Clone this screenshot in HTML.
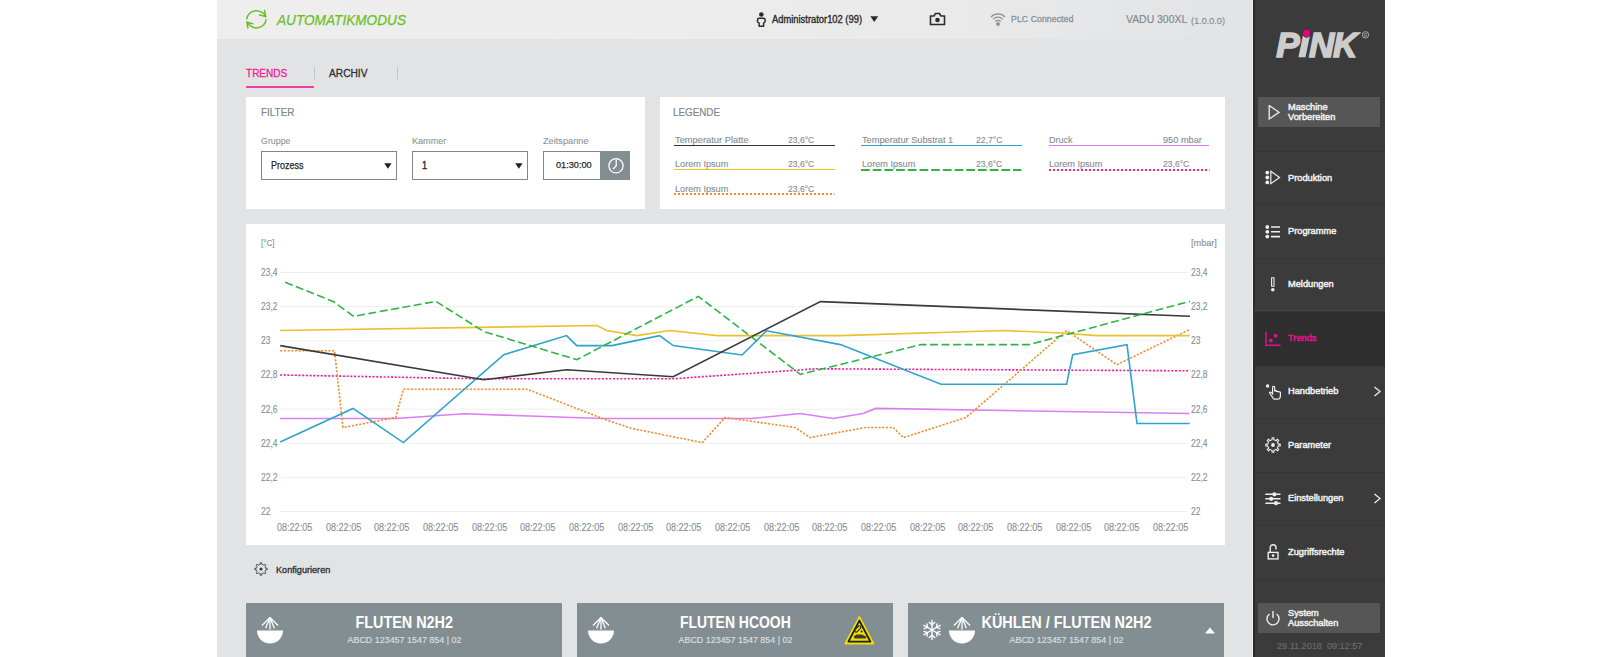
<!DOCTYPE html>
<html><head><meta charset="utf-8">
<style>
*{margin:0;padding:0;box-sizing:border-box}
html,body{width:1601px;height:657px;overflow:hidden;background:#fff}
body{position:relative;font-family:"Liberation Sans",sans-serif}
.a{position:absolute;white-space:nowrap;line-height:1}
.b{position:absolute}
</style></head><body>
<div class="b" style="left:217px;top:0;width:1037px;height:657px;background:#e2e3e4"></div>
<div class="b" style="left:217px;top:0;width:1036px;height:39px;background:linear-gradient(to right,#eeeeee 0%,#ededed 40%,#e9e9ea 75%,#e3e4e5 95%)"></div>
<svg class="a" style="left:244px;top:8px" width="24" height="22" viewBox="0 0 24 22">
  <g fill="none" stroke="#6cbf1f" stroke-width="1.5" stroke-linecap="round" stroke-linejoin="round">
    <path d="M2.81 10.85 A9.6 8.6 0 0 1 21.58 8.79"/>
    <path d="M21.99 11.75 A9.6 8.6 0 0 1 3.38 14.24"/>
    <path d="M15.6 6.9 L21.6 8.4 L20.6 2.6"/>
    <path d="M8.7 15.8 L2.9 14.3 L3.9 20"/>
  </g>
</svg>
<div class="a" style="left:277.00px;top:13.07px;font-size:14.57px;color:#6cbf1f;font-style:italic;-webkit-text-stroke:0.25px #6cbf1f;transform:scaleX(0.9361);transform-origin:0 0">AUTOMATIKMODUS</div>
<svg class="a" style="left:755px;top:12px" width="12" height="15" viewBox="0 0 12 15">
  <circle cx="6.3" cy="2.5" r="2.3" fill="#2b2b2b"/>
  <path d="M2.5 7.8 Q2.5 6.3 4 6.3 H8.6 Q10.1 6.3 10.1 7.8 V9.6 Q10.1 10.6 8.6 11 V14.2 H4.1 V11 Q2.5 10.6 2.5 9.6 Z" fill="none" stroke="#2b2b2b" stroke-width="1.5" stroke-linejoin="round"/>
</svg>
<div class="a" style="left:771.90px;top:15.23px;font-size:10.0px;color:#2b2b2b;-webkit-text-stroke:0.35px #2b2b2b;transform:scaleX(0.9360);transform-origin:0 0">Administrator102 (99)</div>
<svg class="a" style="left:869.5px;top:16.3px" width="9" height="7"><path d="M0.3 0.3 H8.2 L4.25 6 Z" fill="#2b2b2b"/></svg>
<svg class="a" style="left:929px;top:12px" width="17" height="14" viewBox="0 0 17 14">
  <path d="M1.5 4 H5 L6.5 1.5 H10.5 L12 4 H15.5 V12.5 H1.5 Z" fill="none" stroke="#2b2b2b" stroke-width="1.6"/>
  <circle cx="8.5" cy="8" r="2.3" fill="#2b2b2b"/>
</svg>
<svg class="a" style="left:990px;top:12px" width="16" height="15" viewBox="0 0 16 15">
  <g fill="none" stroke="#8a9296" stroke-width="1.2">
    <path d="M1 5 A9.5 9.5 0 0 1 15 5"/>
    <path d="M3.2 7.3 A6.5 6.5 0 0 1 12.8 7.3"/>
    <path d="M5.3 9.5 A3.6 3.6 0 0 1 10.7 9.5"/>
  </g>
  <circle cx="8" cy="12" r="1.9" fill="#8a9296"/>
</svg>
<div class="a" style="left:1010.50px;top:15.44px;font-size:9.29px;color:#8a9296;-webkit-text-stroke:0.3px #8a9296;transform:scaleX(0.9522);transform-origin:0 0">PLC Connected</div>
<div class="a" style="left:1125.80px;top:14.22px;font-size:11.43px;color:#7e878b;-webkit-text-stroke:0.15px #7e878b;transform:scaleX(0.9122);transform-origin:0 0">VADU 300XL</div>
<div class="a" style="left:1190.50px;top:16.76px;font-size:8.43px;color:#7e878b;-webkit-text-stroke:0.1px #7e878b;transform:scaleX(1.0837);transform-origin:0 0">(1.0.0.0)</div>
<div class="a" style="left:246.00px;top:68.24px;font-size:11.29px;color:#ee1d97;-webkit-text-stroke:0.3px #ee1d97;transform:scaleX(0.8892);transform-origin:0 0">TRENDS</div>
<div class="b" style="left:246px;top:86px;width:68px;height:2px;background:#ee3fa6"></div>
<div class="b" style="left:314px;top:67px;width:1px;height:12px;background:#c4c7c9"></div>
<div class="a" style="left:329.00px;top:68.24px;font-size:11.29px;color:#2e2e2e;-webkit-text-stroke:0.3px #2e2e2e;transform:scaleX(0.9032);transform-origin:0 0">ARCHIV</div>
<div class="b" style="left:397px;top:67px;width:1px;height:12px;background:#c4c7c9"></div>
<div class="b" style="left:246px;top:97px;width:399px;height:112px;background:#fff"></div>
<div class="a" style="left:261.00px;top:106.84px;font-size:11.29px;color:#7d878b;-webkit-text-stroke:0.2px #7d878b;transform:scaleX(0.8782);transform-origin:0 0">FILTER</div>
<div class="a" style="left:260.75px;top:137.44px;font-size:9.29px;color:#8a9498;-webkit-text-stroke:0.1px #8a9498;transform:scaleX(0.9526);transform-origin:0 0">Gruppe</div>
<div class="a" style="left:411.70px;top:137.44px;font-size:9.29px;color:#8a9498;-webkit-text-stroke:0.1px #8a9498;transform:scaleX(0.9764);transform-origin:0 0">Kammer</div>
<div class="a" style="left:542.90px;top:137.44px;font-size:9.29px;color:#8a9498;-webkit-text-stroke:0.1px #8a9498;transform:scaleX(0.9908);transform-origin:0 0">Zeitspanne</div>
<div class="b" style="left:261px;top:151px;width:136px;height:29px;border:1.5px solid #7f898d;background:#fff"></div>
<div class="a" style="left:270.75px;top:161.14px;font-size:10.0px;color:#262626;-webkit-text-stroke:0.25px #262626;transform:scaleX(0.8997);transform-origin:0 0">Prozess</div>
<svg class="a" style="left:383.5px;top:162.5px" width="9" height="7"><path d="M0.2 0.2 H7.6 L3.9 5.8 Z" fill="#222"/></svg>
<div class="b" style="left:411.5px;top:151px;width:116.5px;height:29px;border:1.5px solid #7f898d;background:#fff"></div>
<div class="a" style="left:422.00px;top:161.14px;font-size:10.0px;color:#262626;-webkit-text-stroke:0.35px #262626;transform:scaleX(0.9200);transform-origin:0 0">1</div>
<svg class="a" style="left:514.6px;top:162.5px" width="9" height="7"><path d="M0.2 0.2 H7.6 L3.9 5.8 Z" fill="#222"/></svg>
<div class="b" style="left:543px;top:151px;width:87px;height:29px;border:1.5px solid #7f898d;background:#fff"></div>
<div class="b" style="left:600.3px;top:151px;width:29.7px;height:29px;background:#838e92"></div>
<div class="a" style="left:555.50px;top:161.34px;font-size:9.29px;color:#2a2a2a;-webkit-text-stroke:0.25px #2a2a2a;transform:scaleX(0.9878);transform-origin:0 0">01:30:00</div>
<svg class="a" style="left:606px;top:155.5px" width="20" height="20" viewBox="0 0 20 20">
  <circle cx="10" cy="9.8" r="7.1" fill="none" stroke="#fff" stroke-width="1.25"/>
  <path d="M10.2 3.2 V10 L7 13" fill="none" stroke="#fff" stroke-width="1.25"/>
</svg>
<div class="b" style="left:660px;top:97px;width:565px;height:112px;background:#fff"></div>
<div class="a" style="left:673.40px;top:106.82px;font-size:11.43px;color:#7d878b;-webkit-text-stroke:0.2px #7d878b;transform:scaleX(0.8609);transform-origin:0 0">LEGENDE</div>
<div class="a" style="left:674.60px;top:135.12px;font-size:9.43px;color:#858e92;-webkit-text-stroke:0.12px #858e92;transform:scaleX(0.9896);transform-origin:0 0">Temperatur Platte</div>
<div class="a" style="left:788.30px;top:135.12px;font-size:9.43px;color:#858e92;-webkit-text-stroke:0.12px #858e92;transform:scaleX(0.9093);transform-origin:0 0">23,6°C</div>
<div class="b" style="left:674.1px;top:144.6px;width:160.5px;height:1.6px;background:#333333"></div>
<div class="a" style="left:674.60px;top:159.32px;font-size:9.43px;color:#858e92;-webkit-text-stroke:0.12px #858e92;transform:scaleX(0.9694);transform-origin:0 0">Lorem Ipsum</div>
<div class="a" style="left:788.30px;top:159.32px;font-size:9.43px;color:#858e92;-webkit-text-stroke:0.12px #858e92;transform:scaleX(0.9093);transform-origin:0 0">23,6°C</div>
<div class="b" style="left:674.1px;top:168.7px;width:160.5px;height:1.6px;background:#e8c12c"></div>
<div class="a" style="left:674.60px;top:183.72px;font-size:9.43px;color:#858e92;-webkit-text-stroke:0.12px #858e92;transform:scaleX(0.9694);transform-origin:0 0">Lorem Ipsum</div>
<div class="a" style="left:788.30px;top:183.72px;font-size:9.43px;color:#858e92;-webkit-text-stroke:0.12px #858e92;transform:scaleX(0.9093);transform-origin:0 0">23,6°C</div>
<svg class="a" style="left:674.1px;top:192.0px" width="162" height="4"><line x1="0" y1="2" x2="160.5" y2="2" stroke="#f28a2e" stroke-width="1.8" stroke-dasharray="2 2"/></svg>
<div class="a" style="left:861.90px;top:135.12px;font-size:9.43px;color:#858e92;-webkit-text-stroke:0.12px #858e92;transform:scaleX(0.9783);transform-origin:0 0">Temperatur Substrat 1</div>
<div class="a" style="left:975.60px;top:135.12px;font-size:9.43px;color:#858e92;-webkit-text-stroke:0.12px #858e92;transform:scaleX(0.9128);transform-origin:0 0">22,7°C</div>
<div class="b" style="left:861.4px;top:144.6px;width:160.5px;height:1.6px;background:#2ea3cc"></div>
<div class="a" style="left:861.90px;top:159.32px;font-size:9.43px;color:#858e92;-webkit-text-stroke:0.12px #858e92;transform:scaleX(0.9694);transform-origin:0 0">Lorem Ipsum</div>
<div class="a" style="left:975.60px;top:159.32px;font-size:9.43px;color:#858e92;-webkit-text-stroke:0.12px #858e92;transform:scaleX(0.9093);transform-origin:0 0">23,6°C</div>
<svg class="a" style="left:861.4px;top:167.5px" width="162" height="4"><line x1="0" y1="2" x2="160.5" y2="2" stroke="#2fb544" stroke-width="1.8" stroke-dasharray="8.7 3"/></svg>
<div class="a" style="left:1049.40px;top:135.12px;font-size:9.43px;color:#858e92;-webkit-text-stroke:0.12px #858e92;transform:scaleX(0.9509);transform-origin:0 0">Druck</div>
<div class="a" style="left:1163.10px;top:135.12px;font-size:9.43px;color:#858e92;-webkit-text-stroke:0.12px #858e92;transform:scaleX(0.9771);transform-origin:0 0">950 mbar</div>
<div class="b" style="left:1048.9px;top:144.6px;width:160.5px;height:1.6px;background:#d979f2"></div>
<div class="a" style="left:1049.40px;top:159.32px;font-size:9.43px;color:#858e92;-webkit-text-stroke:0.12px #858e92;transform:scaleX(0.9694);transform-origin:0 0">Lorem Ipsum</div>
<div class="a" style="left:1163.10px;top:159.32px;font-size:9.43px;color:#858e92;-webkit-text-stroke:0.12px #858e92;transform:scaleX(0.9093);transform-origin:0 0">23,6°C</div>
<svg class="a" style="left:1048.9px;top:167.5px" width="162" height="4"><line x1="0" y1="2" x2="160.5" y2="2" stroke="#f01d9b" stroke-width="1.8" stroke-dasharray="2 2"/></svg>
<div class="b" style="left:246px;top:224px;width:978.5px;height:321px;background:#fff"></div>
<div class="a" style="left:261.00px;top:267.92px;font-size:10.14px;color:#848d91;-webkit-text-stroke:0.1px #848d91;transform:scaleX(0.8368);transform-origin:0 0">23,4</div>
<div class="a" style="left:1190.50px;top:267.92px;font-size:10.14px;color:#848d91;-webkit-text-stroke:0.1px #848d91;transform:scaleX(0.8368);transform-origin:0 0">23,4</div>
<div class="a" style="left:261.00px;top:302.07px;font-size:10.14px;color:#848d91;-webkit-text-stroke:0.1px #848d91;transform:scaleX(0.8368);transform-origin:0 0">23,2</div>
<div class="a" style="left:1190.50px;top:302.07px;font-size:10.14px;color:#848d91;-webkit-text-stroke:0.1px #848d91;transform:scaleX(0.8368);transform-origin:0 0">23,2</div>
<div class="a" style="left:261.00px;top:336.22px;font-size:10.14px;color:#848d91;-webkit-text-stroke:0.1px #848d91;transform:scaleX(0.8368);transform-origin:0 0">23</div>
<div class="a" style="left:1190.50px;top:336.22px;font-size:10.14px;color:#848d91;-webkit-text-stroke:0.1px #848d91;transform:scaleX(0.8368);transform-origin:0 0">23</div>
<div class="a" style="left:261.00px;top:370.37px;font-size:10.14px;color:#848d91;-webkit-text-stroke:0.1px #848d91;transform:scaleX(0.8368);transform-origin:0 0">22,8</div>
<div class="a" style="left:1190.50px;top:370.37px;font-size:10.14px;color:#848d91;-webkit-text-stroke:0.1px #848d91;transform:scaleX(0.8368);transform-origin:0 0">22,8</div>
<div class="a" style="left:261.00px;top:404.52px;font-size:10.14px;color:#848d91;-webkit-text-stroke:0.1px #848d91;transform:scaleX(0.8368);transform-origin:0 0">22,6</div>
<div class="a" style="left:1190.50px;top:404.52px;font-size:10.14px;color:#848d91;-webkit-text-stroke:0.1px #848d91;transform:scaleX(0.8368);transform-origin:0 0">22,6</div>
<div class="a" style="left:261.00px;top:438.67px;font-size:10.14px;color:#848d91;-webkit-text-stroke:0.1px #848d91;transform:scaleX(0.8368);transform-origin:0 0">22,4</div>
<div class="a" style="left:1190.50px;top:438.67px;font-size:10.14px;color:#848d91;-webkit-text-stroke:0.1px #848d91;transform:scaleX(0.8368);transform-origin:0 0">22,4</div>
<div class="a" style="left:261.00px;top:472.82px;font-size:10.14px;color:#848d91;-webkit-text-stroke:0.1px #848d91;transform:scaleX(0.8368);transform-origin:0 0">22,2</div>
<div class="a" style="left:1190.50px;top:472.82px;font-size:10.14px;color:#848d91;-webkit-text-stroke:0.1px #848d91;transform:scaleX(0.8368);transform-origin:0 0">22,2</div>
<div class="a" style="left:261.00px;top:506.97px;font-size:10.14px;color:#848d91;-webkit-text-stroke:0.1px #848d91;transform:scaleX(0.8368);transform-origin:0 0">22</div>
<div class="a" style="left:1190.50px;top:506.97px;font-size:10.14px;color:#848d91;-webkit-text-stroke:0.1px #848d91;transform:scaleX(0.8368);transform-origin:0 0">22</div>
<div class="a" style="left:261.00px;top:238.32px;font-size:9.43px;color:#848d91;-webkit-text-stroke:0.1px #848d91;transform:scaleX(0.8538);transform-origin:0 0">[°C]</div>
<div class="a" style="left:1190.50px;top:238.32px;font-size:9.43px;color:#848d91;-webkit-text-stroke:0.1px #848d91;transform:scaleX(0.9699);transform-origin:0 0">[mbar]</div>
<div class="a" style="left:277.00px;top:523.02px;font-size:10.14px;color:#848d91;-webkit-text-stroke:0.1px #848d91;transform:scaleX(0.8942);transform-origin:0 0">08:22:05</div>
<div class="a" style="left:325.67px;top:523.02px;font-size:10.14px;color:#848d91;-webkit-text-stroke:0.1px #848d91;transform:scaleX(0.8942);transform-origin:0 0">08:22:05</div>
<div class="a" style="left:374.34px;top:523.02px;font-size:10.14px;color:#848d91;-webkit-text-stroke:0.1px #848d91;transform:scaleX(0.8942);transform-origin:0 0">08:22:05</div>
<div class="a" style="left:423.01px;top:523.02px;font-size:10.14px;color:#848d91;-webkit-text-stroke:0.1px #848d91;transform:scaleX(0.8942);transform-origin:0 0">08:22:05</div>
<div class="a" style="left:471.68px;top:523.02px;font-size:10.14px;color:#848d91;-webkit-text-stroke:0.1px #848d91;transform:scaleX(0.8942);transform-origin:0 0">08:22:05</div>
<div class="a" style="left:520.35px;top:523.02px;font-size:10.14px;color:#848d91;-webkit-text-stroke:0.1px #848d91;transform:scaleX(0.8942);transform-origin:0 0">08:22:05</div>
<div class="a" style="left:569.02px;top:523.02px;font-size:10.14px;color:#848d91;-webkit-text-stroke:0.1px #848d91;transform:scaleX(0.8942);transform-origin:0 0">08:22:05</div>
<div class="a" style="left:617.69px;top:523.02px;font-size:10.14px;color:#848d91;-webkit-text-stroke:0.1px #848d91;transform:scaleX(0.8942);transform-origin:0 0">08:22:05</div>
<div class="a" style="left:666.36px;top:523.02px;font-size:10.14px;color:#848d91;-webkit-text-stroke:0.1px #848d91;transform:scaleX(0.8942);transform-origin:0 0">08:22:05</div>
<div class="a" style="left:715.03px;top:523.02px;font-size:10.14px;color:#848d91;-webkit-text-stroke:0.1px #848d91;transform:scaleX(0.8942);transform-origin:0 0">08:22:05</div>
<div class="a" style="left:763.70px;top:523.02px;font-size:10.14px;color:#848d91;-webkit-text-stroke:0.1px #848d91;transform:scaleX(0.8942);transform-origin:0 0">08:22:05</div>
<div class="a" style="left:812.37px;top:523.02px;font-size:10.14px;color:#848d91;-webkit-text-stroke:0.1px #848d91;transform:scaleX(0.8942);transform-origin:0 0">08:22:05</div>
<div class="a" style="left:861.04px;top:523.02px;font-size:10.14px;color:#848d91;-webkit-text-stroke:0.1px #848d91;transform:scaleX(0.8942);transform-origin:0 0">08:22:05</div>
<div class="a" style="left:909.71px;top:523.02px;font-size:10.14px;color:#848d91;-webkit-text-stroke:0.1px #848d91;transform:scaleX(0.8942);transform-origin:0 0">08:22:05</div>
<div class="a" style="left:958.38px;top:523.02px;font-size:10.14px;color:#848d91;-webkit-text-stroke:0.1px #848d91;transform:scaleX(0.8942);transform-origin:0 0">08:22:05</div>
<div class="a" style="left:1007.05px;top:523.02px;font-size:10.14px;color:#848d91;-webkit-text-stroke:0.1px #848d91;transform:scaleX(0.8942);transform-origin:0 0">08:22:05</div>
<div class="a" style="left:1055.72px;top:523.02px;font-size:10.14px;color:#848d91;-webkit-text-stroke:0.1px #848d91;transform:scaleX(0.8942);transform-origin:0 0">08:22:05</div>
<div class="a" style="left:1104.39px;top:523.02px;font-size:10.14px;color:#848d91;-webkit-text-stroke:0.1px #848d91;transform:scaleX(0.8942);transform-origin:0 0">08:22:05</div>
<div class="a" style="left:1153.06px;top:523.02px;font-size:10.14px;color:#848d91;-webkit-text-stroke:0.1px #848d91;transform:scaleX(0.8942);transform-origin:0 0">08:22:05</div>
<svg class="a" style="left:0;top:0" width="1601" height="657">
<line x1="280" y1="272.50" x2="1187" y2="272.50" stroke="#efefef" stroke-width="1"/>
<line x1="280" y1="306.65" x2="1187" y2="306.65" stroke="#efefef" stroke-width="1"/>
<line x1="280" y1="340.80" x2="1187" y2="340.80" stroke="#efefef" stroke-width="1"/>
<line x1="280" y1="374.95" x2="1187" y2="374.95" stroke="#efefef" stroke-width="1"/>
<line x1="280" y1="409.10" x2="1187" y2="409.10" stroke="#efefef" stroke-width="1"/>
<line x1="280" y1="443.25" x2="1187" y2="443.25" stroke="#efefef" stroke-width="1"/>
<line x1="280" y1="477.40" x2="1187" y2="477.40" stroke="#efefef" stroke-width="1"/>
<line x1="280" y1="511.55" x2="1187" y2="511.55" stroke="#efefef" stroke-width="1"/>
<polyline points="280.0,418.5 396.0,418.5 464.0,413.8 601.8,418.5 752.0,418.5 800.2,413.5 833.0,418.5 863.0,413.5 875.7,408.4 1189.7,413.5" fill="none" stroke="#d97ff2" stroke-width="1.6" stroke-linejoin="miter"/>
<polyline points="280.0,375.0 481.0,378.8 673.0,378.8 816.0,368.8 1189.7,370.8" fill="none" stroke="#f01d9b" stroke-width="1.6" stroke-linejoin="miter" stroke-dasharray="2.1 1.6"/>
<polyline points="280.2,350.7 334.5,350.7 343.0,427.5 395.8,417.5 403.3,389.3 527.0,389.2 606.0,419.8 632.0,428.5 702.3,442.6 725.0,417.5 795.0,427.5 810.0,437.6 865.6,427.5 893.3,427.5 903.3,437.6 966.0,417.5 1066.6,330.5 1116.9,364.7 1189.7,329.5" fill="none" stroke="#f28a2e" stroke-width="1.6" stroke-linejoin="miter" stroke-dasharray="2.1 1.6"/>
<polyline points="280.0,330.5 596.8,325.5 606.8,330.5 637.0,335.6 669.6,330.5 717.4,335.6 840.5,335.6 1003.8,330.5 1061.6,333.0 1096.8,335.6 1189.7,335.6" fill="none" stroke="#e8c12c" stroke-width="1.6" stroke-linejoin="miter"/>
<polyline points="280.2,442.0 353.0,408.4 403.3,442.6 503.8,354.7 566.6,335.6 576.7,345.6 611.9,345.6 659.6,335.6 673.2,345.6 742.0,355.0 766.5,330.8 840.5,344.6 941.0,384.3 1066.6,384.3 1072.7,354.7 1127.0,344.6 1137.0,423.5 1189.7,423.5" fill="none" stroke="#2ea3cc" stroke-width="1.6" stroke-linejoin="miter"/>
<polyline points="280.2,345.6 483.7,379.8 566.6,369.7 673.2,376.8 820.4,301.6 1190.0,316.2" fill="none" stroke="#3a3a3a" stroke-width="1.6" stroke-linejoin="miter"/>
<polyline points="285.2,282.2 333.8,301.8 353.6,316.3 436.0,301.4 483.7,331.5 576.7,359.7 698.3,296.4 800.3,374.3 921.0,344.6 1029.0,344.6 1190.0,301.3" fill="none" stroke="#2fb544" stroke-width="1.6" stroke-linejoin="miter" stroke-dasharray="8 3.5"/>
</svg>
<svg class="a" style="left:252.6px;top:561.3px" width="16" height="16" viewBox="0 0 16 16"><path d="M12.38 6.29 L12.64 7.23 L14.15 7.18 L14.15 8.82 L12.64 8.77 L12.38 9.71 L12.31 9.88 L11.82 10.73 L12.92 11.77 L11.77 12.92 L10.73 11.82 L9.88 12.31 L9.71 12.38 L8.77 12.64 L8.82 14.15 L7.18 14.15 L7.23 12.64 L6.29 12.38 L6.12 12.31 L5.27 11.82 L4.23 12.92 L3.08 11.77 L4.18 10.73 L3.69 9.88 L3.62 9.71 L3.36 8.77 L1.85 8.82 L1.85 7.18 L3.36 7.23 L3.62 6.29 L3.69 6.12 L4.18 5.27 L3.08 4.23 L4.23 3.08 L5.27 4.18 L6.12 3.69 L6.29 3.62 L7.23 3.36 L7.18 1.85 L8.82 1.85 L8.77 3.36 L9.71 3.62 L9.88 3.69 L10.73 4.18 L11.77 3.08 L12.92 4.23 L11.82 5.27 L12.31 6.12 Z" fill="none" stroke="#3a3a3a" stroke-width="0.9" stroke-linejoin="round"/><circle cx="8" cy="8" r="1.6" fill="#3a3a3a"/></svg>
<div class="a" style="left:275.80px;top:565.54px;font-size:9.29px;color:#2b2b2b;-webkit-text-stroke:0.3px #2b2b2b;transform:scaleX(0.9834);transform-origin:0 0">Konfigurieren</div>
<div class="b" style="left:246px;top:603px;width:316px;height:54px;background:#838e93"></div>
<div class="a" style="left:350.77px;top:614.70px;font-size:15.71px;color:#fff;font-weight:bold;transform:scaleX(0.9168);transform-origin:50% 0">FLUTEN N2H2</div>
<div class="a" style="left:346.53px;top:636.08px;font-size:9.0px;color:#dde1e3;-webkit-text-stroke:0.12px #dde1e3;transform:scaleX(0.9918);transform-origin:50% 0">ABCD 123457 1547 854 | 02</div>
<div class="b" style="left:577px;top:603px;width:316px;height:54px;background:#838e93"></div>
<div class="a" style="left:672.62px;top:614.70px;font-size:15.71px;color:#fff;font-weight:bold;transform:scaleX(0.8882);transform-origin:50% 0">FLUTEN HCOOH</div>
<div class="a" style="left:677.53px;top:636.08px;font-size:9.0px;color:#dde1e3;-webkit-text-stroke:0.12px #dde1e3;transform:scaleX(0.9918);transform-origin:50% 0">ABCD 123457 1547 854 | 02</div>
<div class="b" style="left:908px;top:603px;width:316.3px;height:54px;background:#838e93"></div>
<div class="a" style="left:973.67px;top:614.70px;font-size:15.71px;color:#fff;font-weight:bold;transform:scaleX(0.9191);transform-origin:50% 0">KÜHLEN / FLUTEN N2H2</div>
<div class="a" style="left:1008.68px;top:636.08px;font-size:9.0px;color:#dde1e3;-webkit-text-stroke:0.12px #dde1e3;transform:scaleX(0.9918);transform-origin:50% 0">ABCD 123457 1547 854 | 02</div>
<svg class="a" style="left:256.3px;top:616.5px" width="28" height="28" viewBox="0 0 28 28">
<path d="M1 13.5 H27 A13 13 0 0 1 1 13.5 Z" fill="#fff"/>
<g stroke="#fff" stroke-width="1.3" fill="none"><path d="M14 0.5 V12.5"/><path d="M14 0.5 L6 8.5"/><path d="M14 0.5 L22 8.5"/><path d="M14 0.5 L9.6 11.2"/><path d="M14 0.5 L18.4 11.2"/></g>
</svg>
<svg class="a" style="left:587.3px;top:616.5px" width="28" height="28" viewBox="0 0 28 28">
<path d="M1 13.5 H27 A13 13 0 0 1 1 13.5 Z" fill="#fff"/>
<g stroke="#fff" stroke-width="1.3" fill="none"><path d="M14 0.5 V12.5"/><path d="M14 0.5 L6 8.5"/><path d="M14 0.5 L22 8.5"/><path d="M14 0.5 L9.6 11.2"/><path d="M14 0.5 L18.4 11.2"/></g>
</svg>
<svg class="a" style="left:947.5px;top:616.5px" width="28" height="28" viewBox="0 0 28 28">
<path d="M1 13.5 H27 A13 13 0 0 1 1 13.5 Z" fill="#fff"/>
<g stroke="#fff" stroke-width="1.3" fill="none"><path d="M14 0.5 V12.5"/><path d="M14 0.5 L6 8.5"/><path d="M14 0.5 L22 8.5"/><path d="M14 0.5 L9.6 11.2"/><path d="M14 0.5 L18.4 11.2"/></g>
</svg>
<svg class="a" style="left:844px;top:615px" width="31" height="30" viewBox="0 0 31 30">
<path d="M15.4 1.8 L29.6 28.6 H1.2 Z" fill="#f2de00" stroke="#f2de00" stroke-width="1.6" stroke-linejoin="round"/>
<path d="M15.4 5.6 L26.4 26.6 H4.4 Z" fill="none" stroke="#1e1e1e" stroke-width="1.9" stroke-linejoin="round"/>
<rect x="12.2" y="10.2" width="3" height="7.5" rx="1.4" transform="rotate(45 13.7 14)" fill="none" stroke="#222" stroke-width="1.1"/>
<circle cx="17.6" cy="16.4" r="1" fill="#222"/>
<path d="M9.8 21.3 L12.5 19.6 H18 L22.5 21.8 L22 23.4 H10.5 Z" fill="#3a3a3a"/>
</svg>
<svg class="a" style="left:921px;top:619px" width="22" height="22" viewBox="0 0 22 22"><g stroke="#fff" stroke-width="1.4" fill="none" stroke-linecap="round"><path d="M11.00 1.50 L11.00 20.50"/><path d="M2.77 6.25 L19.23 15.75"/><path d="M2.77 15.75 L19.23 6.25"/><path d="M11.00 16.20 L8.24 18.51"/><path d="M11.00 16.20 L13.76 18.51"/><path d="M6.50 13.60 L3.11 12.37"/><path d="M6.50 13.60 L5.87 17.15"/><path d="M6.50 8.40 L5.87 4.85"/><path d="M6.50 8.40 L3.11 9.63"/><path d="M11.00 5.80 L13.76 3.49"/><path d="M11.00 5.80 L8.24 3.49"/><path d="M15.50 8.40 L18.89 9.63"/><path d="M15.50 8.40 L16.13 4.85"/><path d="M15.50 13.60 L16.13 17.15"/><path d="M15.50 13.60 L18.89 12.37"/></g></svg>
<svg class="a" style="left:1205px;top:627px" width="11" height="7"><path d="M5 0.5 L10 6.5 H0 Z" fill="#fff"/></svg>
<div class="b" style="left:1254px;top:0;width:131px;height:657px;background:#3b3b3b"></div>
<div class="b" style="left:1252px;top:0;width:1px;height:657px;background:#f0f1f2"></div><div class="b" style="left:1253px;top:0;width:1.5px;height:657px;background:#2a2a2a"></div>
<div class="a" style="left:1276.3px;top:27px;font-size:35px;font-weight:bold;font-style:italic;color:#cdcdcd;-webkit-text-stroke:1.6px #cdcdcd">P</div>
<div class="a" style="left:1309px;top:27px;font-size:35px;font-weight:bold;font-style:italic;color:#cdcdcd;-webkit-text-stroke:1.6px #cdcdcd">N</div>
<div class="a" style="left:1333.2px;top:27px;font-size:35px;font-weight:bold;font-style:italic;color:#cdcdcd;-webkit-text-stroke:1.6px #cdcdcd;transform:scaleX(0.96);transform-origin:0 0">K</div>
<svg class="a" style="left:1290px;top:28px" width="80" height="32"><polygon points="8.4,29.3 15.5,29.3 19.9,8 12.8,8" fill="#cdcdcd"/><circle cx="16.6" cy="5.1" r="4.2" fill="#e6007e" stroke="#2e2e2e" stroke-width="0.8"/><circle cx="75.5" cy="6.8" r="3.2" fill="none" stroke="#b5b5b5" stroke-width="0.9"/><text x="75.5" y="8.9" font-family="Liberation Sans" font-size="5" fill="#b5b5b5" text-anchor="middle">R</text></svg>
<div class="b" style="left:1258px;top:97px;width:122px;height:30px;background:#565656"></div>
<svg class="a" style="left:1267px;top:105px" width="13" height="15"><path d="M2.2 0.5 L12 7.3 L2.2 14 Z" fill="none" stroke="#eee" stroke-width="1.3"/></svg>
<div class="a" style="left:1288.00px;top:101.78px;font-size:9.71px;color:#f0f0f0;-webkit-text-stroke:0.5px #f0f0f0;transform:scaleX(0.9528);transform-origin:0 0">Maschine</div>
<div class="a" style="left:1288.00px;top:112.38px;font-size:9.71px;color:#f0f0f0;-webkit-text-stroke:0.5px #f0f0f0;transform:scaleX(0.9528);transform-origin:0 0">Vorbereiten</div>
<div class="b" style="left:1258px;top:603px;width:122px;height:30px;background:#565656"></div>
<div class="a" style="left:1288.00px;top:607.78px;font-size:9.71px;color:#f0f0f0;-webkit-text-stroke:0.5px #f0f0f0;transform:scaleX(0.9528);transform-origin:0 0">System</div>
<div class="a" style="left:1288.00px;top:618.38px;font-size:9.71px;color:#f0f0f0;-webkit-text-stroke:0.5px #f0f0f0;transform:scaleX(0.9528);transform-origin:0 0">Ausschalten</div>
<svg class="a" style="left:1265px;top:610.3px" width="16" height="17" viewBox="0 0 16 17"><path d="M4.5 4 A6 6 0 1 0 11.5 4" fill="none" stroke="#eee" stroke-width="1.4"/><path d="M8 1 V8" stroke="#eee" stroke-width="1.4"/></svg>
<div class="a" style="left:1276.70px;top:641.32px;font-size:9.43px;color:#6e6e6e;-webkit-text-stroke:0.1px #6e6e6e;transform:scaleX(0.9652);transform-origin:0 0">29.11.2018&nbsp;&nbsp;09:12:57</div>
<div class="b" style="left:1254px;top:151px;width:131px;height:1px;background:#353535"></div>
<div class="b" style="left:1254px;top:204px;width:131px;height:1px;background:#353535"></div>
<div class="b" style="left:1254px;top:257.5px;width:131px;height:1px;background:#353535"></div>
<div class="b" style="left:1254px;top:311px;width:131px;height:1px;background:#353535"></div>
<div class="b" style="left:1254px;top:364.5px;width:131px;height:1px;background:#353535"></div>
<div class="b" style="left:1254px;top:418px;width:131px;height:1px;background:#353535"></div>
<div class="b" style="left:1254px;top:471.5px;width:131px;height:1px;background:#353535"></div>
<div class="b" style="left:1254px;top:525px;width:131px;height:1px;background:#353535"></div>
<div class="b" style="left:1254px;top:578.5px;width:131px;height:1px;background:#353535"></div>
<div class="b" style="left:1254px;top:311.5px;width:131px;height:54px;background:#2f2e2f"></div><div class="b" style="left:1254px;top:310px;width:131px;height:1px;background:#424242"></div>
<div class="a" style="left:1288.00px;top:172.58px;font-size:9.71px;color:#f0f0f0;-webkit-text-stroke:0.5px #f0f0f0;transform:scaleX(0.9528);transform-origin:0 0">Produktion</div>
<svg class="a" style="left:1265px;top:170.1px" width="16" height="16" viewBox="0 0 16 16"><circle cx="2.3" cy="2.6" r="1.9" fill="#eee"/><circle cx="2.3" cy="7.5" r="1.9" fill="#eee"/><circle cx="2.3" cy="12.4" r="1.9" fill="#eee"/><path d="M5.8 1.3 L14.6 7.5 L5.8 13.7 Z" fill="none" stroke="#eee" stroke-width="1.2"/></svg>
<div class="a" style="left:1288.00px;top:226.03px;font-size:9.71px;color:#f0f0f0;-webkit-text-stroke:0.5px #f0f0f0;transform:scaleX(0.9528);transform-origin:0 0">Programme</div>
<svg class="a" style="left:1265px;top:223.6px" width="16" height="16" viewBox="0 0 16 16"><circle cx="2.3" cy="3" r="1.9" fill="#eee"/><circle cx="2.3" cy="7.8" r="1.9" fill="#eee"/><circle cx="2.3" cy="12.6" r="1.9" fill="#eee"/><path d="M6 3 H15 M6 7.8 H15 M6 12.6 H15" stroke="#eee" stroke-width="1.6"/></svg>
<div class="a" style="left:1288.00px;top:279.48px;font-size:9.71px;color:#f0f0f0;-webkit-text-stroke:0.5px #f0f0f0;transform:scaleX(0.9528);transform-origin:0 0">Meldungen</div>
<svg class="a" style="left:1265px;top:277.0px" width="16" height="16" viewBox="0 0 16 16"><path d="M6.6 0.8 H9 V9.3 H6.6 Z" fill="none" stroke="#eee" stroke-width="1.1"/><circle cx="7.8" cy="12.7" r="1.8" fill="#eee"/></svg>
<div class="a" style="left:1288.00px;top:332.93px;font-size:9.71px;color:#e0138c;-webkit-text-stroke:0.5px #e0138c;transform:scaleX(0.9528);transform-origin:0 0">Trends</div>
<svg class="a" style="left:1265px;top:330.5px" width="16" height="16" viewBox="0 0 16 16"><path d="M1 0.5 V14.3 H15.5" fill="none" stroke="#e0138c" stroke-width="1.5"/><circle cx="5.8" cy="9.5" r="1.9" fill="#e0138c"/><circle cx="10.6" cy="4.7" r="1.9" fill="#e0138c"/></svg>
<div class="a" style="left:1288.00px;top:386.38px;font-size:9.71px;color:#f0f0f0;-webkit-text-stroke:0.5px #f0f0f0;transform:scaleX(0.9528);transform-origin:0 0">Handbetrieb</div>
<svg class="a" style="left:1373px;top:386.4px" width="9" height="11"><path d="M1.5 1 L7 5.5 L1.5 10" fill="none" stroke="#eee" stroke-width="1.3"/></svg>
<svg class="a" style="left:1265px;top:383.9px" width="16" height="16" viewBox="0 0 16 16"><circle cx="2.6" cy="2.0" r="1.7" fill="#eee"/><path transform="translate(1.6 0)" d="M6 13.3 L3.2 9.5 C2.5 8.5 3.8 7.5 4.6 8.4 L6 9.9 V3.3 C6 1.9 8.1 1.9 8.1 3.3 V7.4 C8.1 6.4 10 6.4 10 7.4 V8 C10 7 11.9 7 11.9 8 V8.6 C11.9 7.7 13.8 7.7 13.8 8.6 V11.8 C13.8 13.5 12.7 15.2 11 15.2 H7.5 C6.9 15.2 6.4 14.2 6 13.3 Z" fill="none" stroke="#eee" stroke-width="1.2"/></svg>
<div class="a" style="left:1288.00px;top:439.83px;font-size:9.71px;color:#f0f0f0;-webkit-text-stroke:0.5px #f0f0f0;transform:scaleX(0.9528);transform-origin:0 0">Parameter</div>
<svg class="a" style="left:1265px;top:437.4px" width="16" height="16" viewBox="0 0 16 16"><path d="M12.94 6.07 L13.23 7.13 L15.24 7.04 L15.24 8.96 L13.23 8.87 L12.94 9.93 L12.86 10.12 L12.31 11.08 L13.80 12.44 L12.44 13.80 L11.08 12.31 L10.12 12.86 L9.93 12.94 L8.87 13.23 L8.96 15.24 L7.04 15.24 L7.13 13.23 L6.07 12.94 L5.88 12.86 L4.92 12.31 L3.56 13.80 L2.20 12.44 L3.69 11.08 L3.14 10.12 L3.06 9.93 L2.77 8.87 L0.76 8.96 L0.76 7.04 L2.77 7.13 L3.06 6.07 L3.14 5.88 L3.69 4.92 L2.20 3.56 L3.56 2.20 L4.92 3.69 L5.88 3.14 L6.07 3.06 L7.13 2.77 L7.04 0.76 L8.96 0.76 L8.87 2.77 L9.93 3.06 L10.12 3.14 L11.08 3.69 L12.44 2.20 L13.80 3.56 L12.31 4.92 L12.86 5.88 Z" fill="none" stroke="#eee" stroke-width="1.1" stroke-linejoin="round"/><circle cx="8" cy="8" r="1.9" fill="#eee"/></svg>
<div class="a" style="left:1288.00px;top:493.28px;font-size:9.71px;color:#f0f0f0;-webkit-text-stroke:0.5px #f0f0f0;transform:scaleX(0.9528);transform-origin:0 0">Einstellungen</div>
<svg class="a" style="left:1373px;top:493.3px" width="9" height="11"><path d="M1.5 1 L7 5.5 L1.5 10" fill="none" stroke="#eee" stroke-width="1.3"/></svg>
<svg class="a" style="left:1265px;top:490.8px" width="16" height="16" viewBox="0 0 16 16"><path d="M0.3 3.3 H15.5 M0.3 7.8 H15.5 M0.3 12.2 H15.5" stroke="#eee" stroke-width="1.6"/><circle cx="9.4" cy="3.3" r="2.1" fill="#eee"/><circle cx="6.2" cy="7.8" r="2.1" fill="#eee"/><circle cx="11" cy="12.2" r="2.1" fill="#eee"/></svg>
<div class="a" style="left:1288.00px;top:546.73px;font-size:9.71px;color:#f0f0f0;-webkit-text-stroke:0.5px #f0f0f0;transform:scaleX(0.9528);transform-origin:0 0">Zugriffsrechte</div>
<svg class="a" style="left:1265px;top:544.2px" width="16" height="16" viewBox="0 0 16 16"><path d="M5.2 8.3 V3.6 A2.9 2.9 0 0 1 11 3.6 V5.6" fill="none" stroke="#eee" stroke-width="1.4"/><rect x="3.2" y="8.4" width="9.8" height="6.5" fill="none" stroke="#eee" stroke-width="1.4"/><circle cx="8.1" cy="11.6" r="1.3" fill="#eee"/></svg>
</body></html>
